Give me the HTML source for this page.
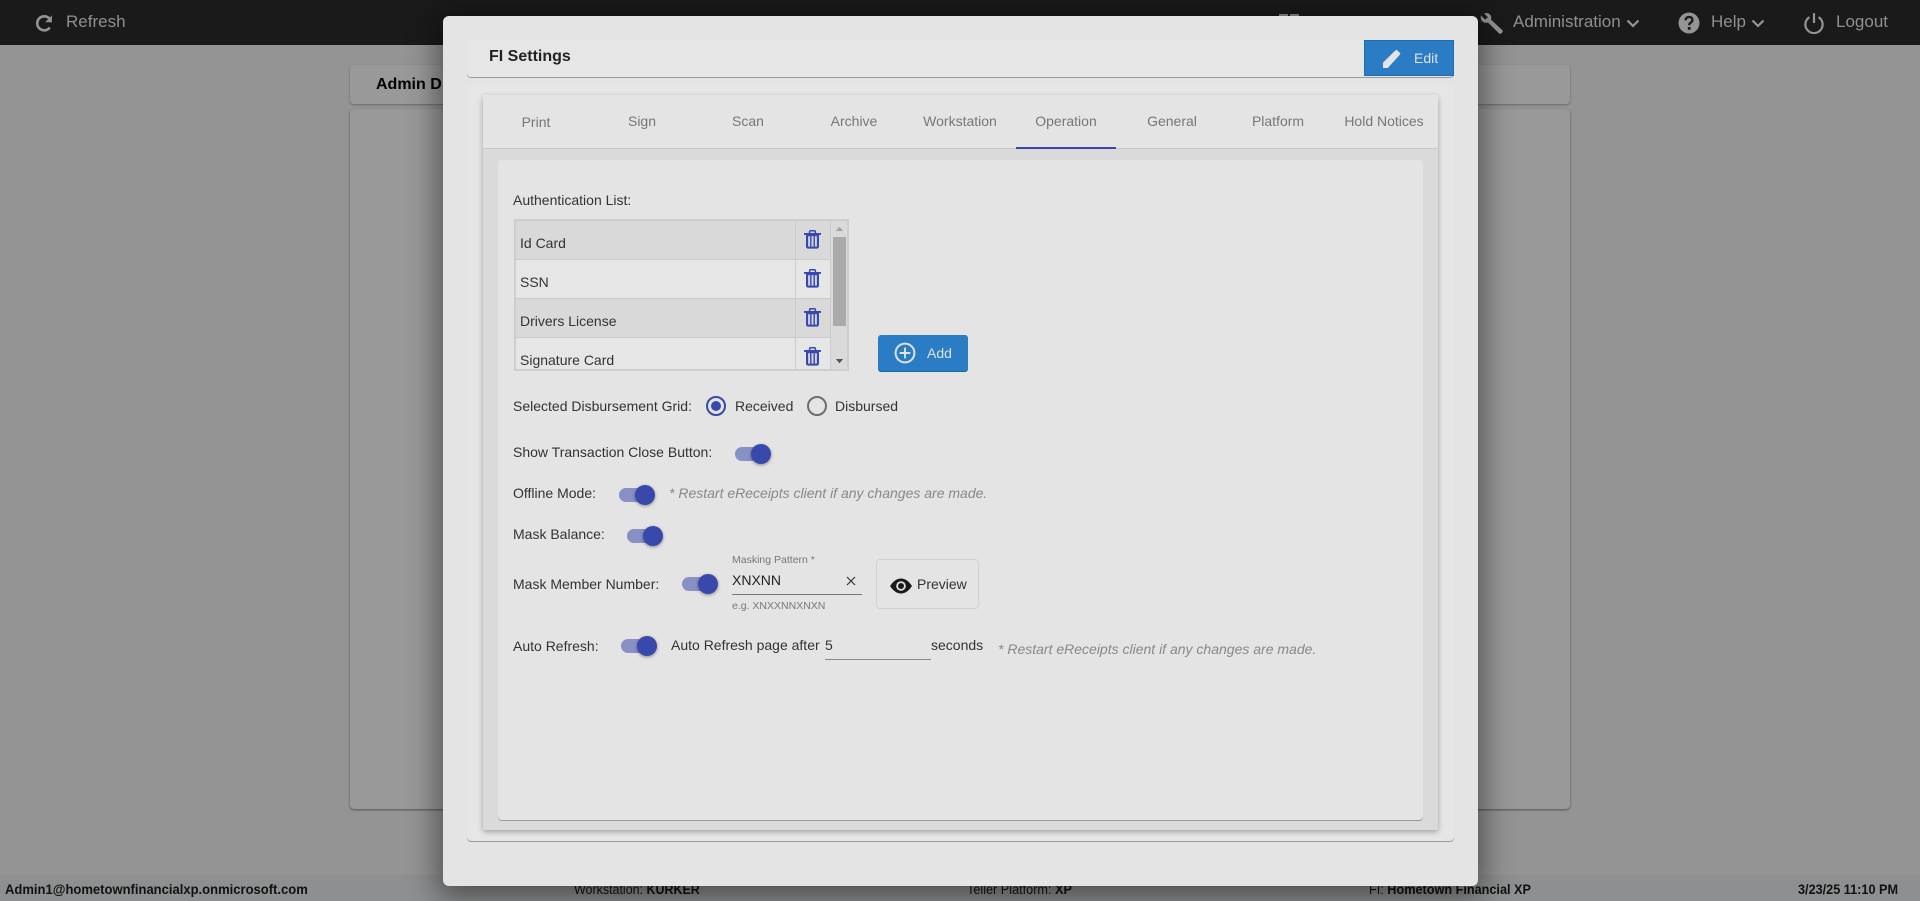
<!DOCTYPE html>
<html lang="en"><head><meta charset="utf-8"><title>FI Settings</title>
<style>
html,body{margin:0;padding:0;width:1920px;height:901px;overflow:hidden;background:#949494;font-family:"Liberation Sans",Arial,sans-serif;font-size:14px;color:#333}
div,svg,span.t{position:absolute;box-sizing:border-box}
.t{position:absolute;white-space:nowrap;line-height:20px;height:20px}
.nav{color:#8f8f8f;font-size:17px;top:12px}
.foot{color:#111;font-size:14px;top:879px;font-weight:400;transform-origin:0 50%;transform:scaleX(.905)}
.foot b{font-weight:700}
.tab{color:#777;width:100px;text-align:center;top:111px}
.row{left:516px;width:280px;height:38px}
.cell{left:796px;width:34px;height:38px}
.sep{left:516px;width:315px;height:1px;background:#c9cbd0}
.track{width:34px;height:14px;border-radius:7px;background:#8890c5}
.knob{width:20px;height:20px;border-radius:50%;background:#3949ab;box-shadow:0 1px 3px rgba(0,0,0,.4)}
.note{color:#888;font-style:italic}
</style></head><body>
<svg width="0" height="0" style="position:absolute"><defs>
<g id="tr"><path d="M5.6 3.4V1.8Q5.6.7 6.7.7h3.6q1.1 0 1.1 1.1v1.6" fill="none" stroke="#3949ab" stroke-width="1.5"/><rect x="0" y="3" width="17" height="1.9" fill="#3949ab"/><path d="M2 4.5V16.4Q2 18.6 4.2 18.6H12.8Q15 18.6 15 16.4V4.5Z" fill="#3949ab"/><rect x="4.1" y="6.2" width="2" height="10.4" fill="#cfd3e4"/><rect x="7.5" y="6.2" width="2" height="10.4" fill="#cfd3e4"/><rect x="10.9" y="6.2" width="2" height="10.4" fill="#cfd3e4"/></g>
</defs></svg>

<!-- top bar -->
<div style="left:0;top:0;width:1920px;height:45px;background:#1a1a1a"></div>
<svg style="left:35px;top:14px" width="19" height="19" viewBox="0 0 19 19"><path d="M14.8 13.6A7 7 0 1 1 14.4 4.6" fill="none" stroke="#949494" stroke-width="2.6"/><path d="M16.9 1.4V8.2H10.2z" fill="#949494"/></svg>
<span class="t nav" style="left:66px">Refresh</span>
<div style="left:1279px;top:14px;width:9px;height:4px;background:#8f8f8f"></div>
<div style="left:1290px;top:14px;width:9px;height:4px;background:#8f8f8f"></div>
<svg style="left:1479px;top:12px" width="25" height="23" viewBox="0 0 25 23"><path d="M2 3.5 6 7.5 9 5.2 5.2 1.6Q8.5.2 10.8 2.4 13 4.6 12 7.6L23.6 18.4Q24.2 19.4 23 20.8 21.6 22.4 20.4 21.8L9 10.6Q5.6 11.4 3.2 9.4 1 7 2 3.5Z" fill="#949494"/></svg>
<span class="t nav" style="left:1513px">Administration</span>
<svg style="left:1626px;top:18px" width="14" height="11" viewBox="0 0 14 11"><path d="M1.5 2.5 7 8 12.5 2.5" fill="none" stroke="#949494" stroke-width="2.2"/></svg>
<svg style="left:1678px;top:12px" width="22" height="22" viewBox="0 0 22 22"><circle cx="11" cy="11" r="10.5" fill="#949494"/><path d="M7.6 8.3Q7.8 5 11 5 14.4 5 14.4 7.9 14.4 9.6 12.6 10.7 11.2 11.5 11.2 13.2" fill="none" stroke="#1a1a1a" stroke-width="2.3"/><rect x="9.8" y="15" width="2.8" height="2.8" fill="#1a1a1a"/></svg>
<span class="t nav" style="left:1711px">Help</span>
<svg style="left:1751px;top:18px" width="14" height="11" viewBox="0 0 14 11"><path d="M1.5 2.5 7 8 12.5 2.5" fill="none" stroke="#949494" stroke-width="2.2"/></svg>
<svg style="left:1803px;top:12px" width="22" height="22" viewBox="0 0 22 22"><path d="M6.4 5.2A8.6 8.6 0 1 0 15.6 5.2" fill="none" stroke="#949494" stroke-width="2.2"/><path d="M11 1.2V11" stroke="#949494" stroke-width="2.2"/></svg>
<span class="t nav" style="left:1836px">Logout</span>

<!-- background cards -->
<div style="left:350px;top:65px;width:1220px;height:39px;background:#999;border-radius:4px;box-shadow:0 1px 2px rgba(0,0,0,.3)"></div>
<span class="t" style="left:376px;top:75px;font-weight:700;font-size:16px;color:#000">Admin D</span>
<div style="left:350px;top:109px;width:1220px;height:700px;background:#999;border-radius:4px;box-shadow:0 1px 2px rgba(0,0,0,.45)"></div>

<!-- footer -->
<div style="left:0;top:875px;width:1920px;height:26px;background:#8d8f90"></div>
<span class="t foot" style="left:5px;transform:scaleX(.93)"><b>Admin1@hometownfinancialxp.onmicrosoft.com</b></span>
<span class="t foot" style="left:574px;transform:scaleX(.89)">Workstation: <b>KURKER</b></span>
<span class="t foot" style="left:967px">Teller Platform: <b>XP</b></span>
<span class="t foot" style="left:1369px">FI: <b>Hometown Financial XP</b></span>
<span class="t foot" style="left:1798px"><b>3/23/25 11:10 PM</b></span>

<!-- modal -->
<div style="left:443px;top:16px;width:1035px;height:870px;background:#e4e4e4;border-radius:6px;box-shadow:0 6px 30px 6px rgba(0,0,0,.45)"></div>
<div style="left:467px;top:40px;width:987px;height:37px;background:#e6e6e6;border-radius:4px;box-shadow:0 1px 0 #999"></div>
<span class="t" style="left:489px;top:47px;font-weight:700;font-size:16px;color:#222">FI Settings</span>
<div style="left:1364px;top:40px;width:90px;height:36px;background:#2a7dc4;border:1px solid #1f6cb0"></div>
<svg style="left:1382px;top:49px" width="20" height="20" viewBox="0 0 20 20"><path d="M1 19V13.6L13 1.8 14.6.8 18.4 4.4 17.6 6 5.8 19Z" fill="#e4e4e4"/></svg>
<span class="t" style="left:1414px;top:48px;color:#dfe3e8">Edit</span>

<div style="left:467px;top:85px;width:987px;height:756px;background:#e6e6e6;border-radius:4px;box-shadow:0 1px 0 #999"></div>
<div style="left:483px;top:95px;width:955px;height:735px;background:#dadada;border-radius:2px;box-shadow:0 2px 6px rgba(0,0,0,.3)"></div>
<div style="left:483px;top:95px;width:955px;height:54px;background:#e4e4e4;border-bottom:1px solid #c8c8c8"></div>
<span class="t tab" style="left:486px;top:112px">Print</span>
<span class="t tab" style="left:592px">Sign</span>
<span class="t tab" style="left:698px">Scan</span>
<span class="t tab" style="left:804px">Archive</span>
<span class="t tab" style="left:910px">Workstation</span>
<span class="t tab" style="left:1016px">Operation</span>
<span class="t tab" style="left:1122px">General</span>
<span class="t tab" style="left:1228px">Platform</span>
<span class="t tab" style="left:1334px">Hold Notices</span>
<div style="left:1016px;top:147px;width:100px;height:2px;background:#3949ab"></div>

<div style="left:498px;top:160px;width:925px;height:660px;background:#e4e4e4;border-radius:4px;box-shadow:0 1px 0 #9a9a9a"></div>

<span class="t" style="left:513px;top:190px">Authentication List:</span>

<!-- list -->
<div style="left:514px;top:219px;width:335px;height:152px;background:#dadada;border:2px solid #ccced3"></div>
<div class="row" style="top:221px;background:#d9d9d9"></div><div class="cell" style="top:221px;background:#d9d9d9"></div>
<div class="row" style="top:260px;background:#e6e6e6"></div><div class="cell" style="top:260px;background:#e6e6e6"></div>
<div class="row" style="top:299px;background:#d9d9d9"></div><div class="cell" style="top:299px;background:#d9d9d9"></div>
<div class="row" style="top:338px;height:31px;background:#e6e6e6"></div><div class="cell" style="top:338px;height:31px;background:#e6e6e6"></div>
<div class="sep" style="top:259px"></div><div class="sep" style="top:298px"></div><div class="sep" style="top:337px"></div>
<div style="left:795px;top:221px;width:1px;height:148px;background:#c9cbd0"></div>
<div style="left:830px;top:221px;width:1px;height:148px;background:#c9cbd0"></div>
<span class="t" style="left:520px;top:233px">Id Card</span>
<span class="t" style="left:520px;top:272px">SSN</span>
<span class="t" style="left:520px;top:311px">Drivers License</span>
<span class="t" style="left:520px;top:350px">Signature Card</span>
<svg style="left:804px;top:230px" width="17" height="19" viewBox="0 0 17 19"><use href="#tr"/></svg>
<svg style="left:804px;top:269px" width="17" height="19" viewBox="0 0 17 19"><use href="#tr"/></svg>
<svg style="left:804px;top:308px" width="17" height="19" viewBox="0 0 17 19"><use href="#tr"/></svg>
<svg style="left:804px;top:347px" width="17" height="19" viewBox="0 0 17 19"><use href="#tr"/></svg>
<div style="left:833px;top:237px;width:13px;height:89px;background:#aaa"></div>
<svg style="left:835px;top:226px" width="9" height="6"><path d="M.8 5 4.5 .8 8.2 5Z" fill="#a3a3a3"/></svg>
<svg style="left:835px;top:358px" width="9" height="6"><path d="M.8 1 4.5 5.2 8.2 1Z" fill="#555"/></svg>

<!-- add -->
<div style="left:878px;top:335px;width:90px;height:36px;background:#2a7dc4;border-radius:3px;box-shadow:0 1px 0 #2167a3"></div>
<svg style="left:894px;top:342px" width="22" height="22" viewBox="0 0 22 22"><circle cx="11" cy="11" r="9.4" fill="none" stroke="#dfe3e8" stroke-width="2"/><path d="M11 5.6V16.4M5.6 11H16.4" stroke="#dfe3e8" stroke-width="2"/></svg>
<span class="t" style="left:927px;top:343px;color:#dfe3e8">Add</span>

<!-- radios -->
<span class="t" style="left:513px;top:396px">Selected Disbursement Grid:</span>
<div style="left:706px;top:396px;width:20px;height:20px;border-radius:50%;border:2px solid #3949ab"></div>
<div style="left:711px;top:401px;width:10px;height:10px;border-radius:50%;background:#3949ab"></div>
<span class="t" style="left:735px;top:396px">Received</span>
<div style="left:807px;top:396px;width:20px;height:20px;border-radius:50%;border:2px solid #6d6d6d"></div>
<span class="t" style="left:835px;top:396px">Disbursed</span>

<!-- toggles -->
<span class="t" style="left:513px;top:442px">Show Transaction Close Button:</span>
<div class="track" style="left:735px;top:447px"></div><div class="knob" style="left:751px;top:444px"></div>

<span class="t" style="left:513px;top:483px">Offline Mode:</span>
<div class="track" style="left:619px;top:488px"></div><div class="knob" style="left:635px;top:485px"></div>
<span class="t note" style="left:669px;top:483px">* Restart eReceipts client if any changes are made.</span>

<span class="t" style="left:513px;top:524px">Mask Balance:</span>
<div class="track" style="left:627px;top:529px"></div><div class="knob" style="left:643px;top:526px"></div>

<span class="t" style="left:513px;top:574px">Mask Member Number:</span>
<div class="track" style="left:682px;top:577px"></div><div class="knob" style="left:698px;top:574px"></div>
<span class="t" style="left:732px;top:550px;font-size:10.5px;color:#777">Masking Pattern *</span>
<span class="t" style="left:732px;top:570px;color:#222">XNXNN</span>
<div style="left:732px;top:594px;width:130px;height:1px;background:#777"></div>
<svg style="left:846px;top:576px" width="10" height="10"><path d="M1 1 9 9M9 1 1 9" stroke="#333" stroke-width="1.2"/></svg>
<span class="t" style="left:732px;top:596px;font-size:10.5px;color:#777">e.g. XNXXNNXNXN</span>
<div style="left:876px;top:559px;width:103px;height:50px;border:1px solid #d2d2d2;border-radius:4px"></div>
<svg style="left:889px;top:577px" width="24" height="18" viewBox="0 0 24 18"><path d="M1 9Q6 1.5 12 1.5T23 9Q18 16.5 12 16.5T1 9Z" fill="#1a1a1a"/><circle cx="12" cy="9" r="4.8" fill="#e4e4e4"/><circle cx="12" cy="9" r="3" fill="#1a1a1a"/></svg>
<span class="t" style="left:917px;top:574px">Preview</span>

<span class="t" style="left:513px;top:636px">Auto Refresh:</span>
<div class="track" style="left:621px;top:639px"></div><div class="knob" style="left:637px;top:636px"></div>
<span class="t" style="left:671px;top:635px">Auto Refresh page after</span>
<span class="t" style="left:825px;top:635px">5</span>
<div style="left:825px;top:659px;width:106px;height:1px;background:#888"></div>
<span class="t" style="left:931px;top:635px">seconds</span>
<span class="t note" style="left:998px;top:639px">* Restart eReceipts client if any changes are made.</span>
</body></html>
